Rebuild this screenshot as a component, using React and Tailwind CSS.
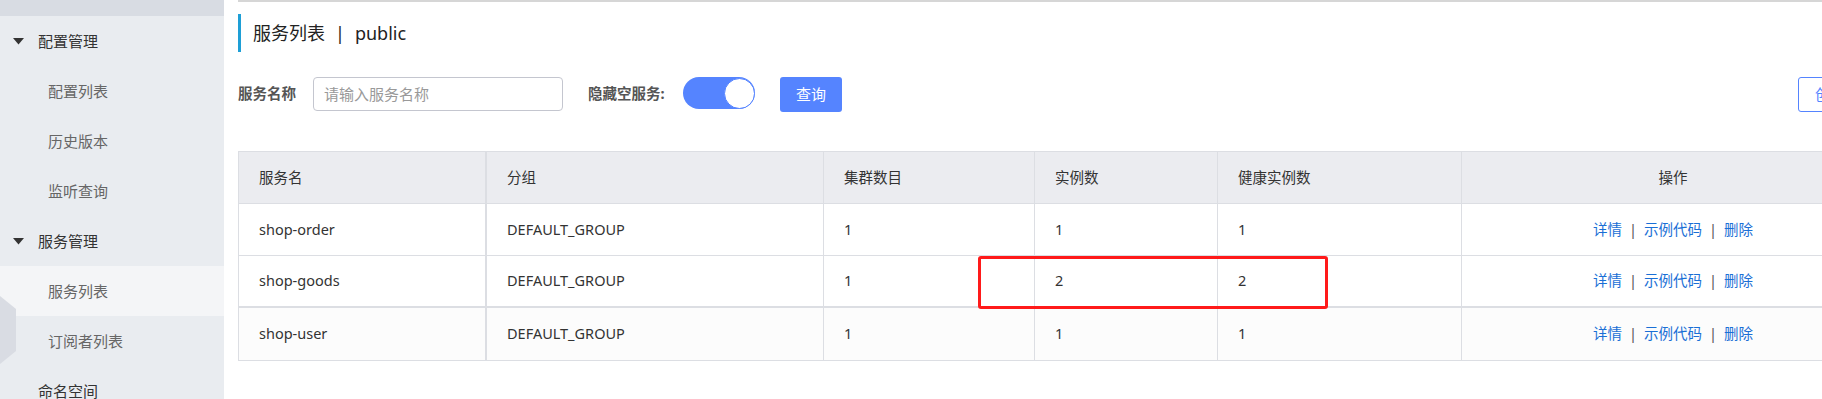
import React from "react";

const FONT = "[font-family:'Noto_Sans','Noto_Sans_CJK_SC',sans-serif]";

function SideHeader({ label }) {
  return (
    <div className="h-[50px] shrink-0 flex items-center text-[15px] text-[#333]">
      <svg width="11" height="7" viewBox="0 0 11 7" className="ml-[13px] mr-[14px]">
        <polygon points="0,0 11,0 5.5,6.5" fill="#333" />
      </svg>
      <span>{label}</span>
    </div>
  );
}

function SideItem({ label, active }) {
  return (
    <div
      className={
        "h-[50px] shrink-0 flex items-center pl-[48px] text-[15px] text-[#666] " +
        (active ? "bg-[#f4f5f7]" : "")
      }
    >
      {label}
    </div>
  );
}

const rows = [
  { name: "shop-order", group: "DEFAULT_GROUP", cluster: "1", inst: "1", healthy: "1", bg: "bg-white", border: "border-b" },
  { name: "shop-goods", group: "DEFAULT_GROUP", cluster: "1", inst: "2", healthy: "2", bg: "bg-white", border: "border-b-2" },
  { name: "shop-user", group: "DEFAULT_GROUP", cluster: "1", inst: "1", healthy: "1", bg: "bg-[#fcfcfc]", border: "" },
];

const GRID = "grid grid-cols-[248px_337px_211px_183px_244px_1fr]";
const CELL = "flex items-center pl-5 border-r border-[#dcdee3]";

export default function App() {
  return (
    <div className={"relative w-[1822px] h-[399px] overflow-hidden flex bg-white " + FONT}>
      {/* Sidebar */}
      <aside className="relative w-[224px] shrink-0 h-full overflow-hidden bg-[#e9ecf0] flex flex-col">
        <div className="h-4 shrink-0 bg-[#d8dce3]" />
        <SideHeader label="配置管理" />
        <SideItem label="配置列表" />
        <SideItem label="历史版本" />
        <SideItem label="监听查询" />
        <SideHeader label="服务管理" />
        <SideItem label="服务列表" active />
        <SideItem label="订阅者列表" />
        <div className="h-[50px] shrink-0 flex items-center pl-[38px] text-[15px] text-[#333]">命名空间</div>
        <svg width="16" height="68" viewBox="0 0 16 68" className="absolute left-0 top-[296px]">
          <polygon points="0,0 16,13 16,55 0,68" fill="#d9dce3" />
        </svg>
      </aside>

      {/* Main */}
      <main className="flex-1 min-w-0 overflow-hidden pl-[14px]">
        <div className="w-[1647px]">
          <div className="h-[2px] bg-[#d6d6d6]" />
          <div className="mt-[12px] h-[38px] border-l-[3px] border-[#1e9fd6] pl-3 flex items-center text-[18px] text-[#222]">
            <span>服务列表</span>
            <span className="mx-[10px]">|</span>
            <span>public</span>
          </div>

          <div className="mt-[25px] h-[35px] flex items-start">
            <div className="w-[75px] h-[34px] flex items-center text-[14.5px] font-bold text-[#555]">服务名称</div>
            <input
              className="w-[250px] h-[34px] border border-[#c4c6cf] rounded-[4px] pl-[10px] text-[15px] outline-none placeholder:text-[#999]"
              placeholder="请输入服务名称"
            />
            <div className="ml-[25px] w-[95px] h-[34px] flex items-center text-[14.5px] font-bold text-[#555]">隐藏空服务:</div>
            <div className="w-[72px] h-[32px] rounded-full bg-[#5584ff] flex items-center justify-end">
              <div className="w-[31px] h-[31px] rounded-full bg-white border border-[#5584ff]" />
            </div>
            <button className="ml-[25px] w-[62px] h-[35px] rounded-[3px] bg-[#5584ff] text-white text-[15px] flex items-center justify-center">
              查询
            </button>
            <button className="ml-auto w-[87px] h-[35px] rounded-[3px] border border-[#5584ff] bg-white text-[#5584ff] text-[15px] pl-[16px] text-left whitespace-nowrap overflow-hidden">
              创建服务
            </button>
          </div>

          {/* Table */}
          <div className="mt-[39px] border border-[#dcdee3] text-[14.5px] text-[#333]">
            <div className={GRID + " h-[52px] bg-[#ebecf0] border-b border-[#dcdee3]"}>
              <div className={CELL + " border-r-2"}>服务名</div>
              <div className={CELL}>分组</div>
              <div className={CELL}>集群数目</div>
              <div className={CELL}>实例数</div>
              <div className={CELL}>健康实例数</div>
              <div className="flex items-center justify-center">操作</div>
            </div>
            {rows.map((r) => (
              <div
                key={r.name}
                className={GRID + " h-[52px] border-[#dcdee3] " + r.bg + " " + r.border}
              >
                <div className={CELL + " border-r-2"}>{r.name}</div>
                <div className={CELL}>{r.group}</div>
                <div className={CELL}>{r.cluster}</div>
                <div className={CELL}>{r.inst}</div>
                <div className={CELL}>{r.healthy}</div>
                <div className="flex items-center justify-center text-[#1a6fd6]">
                  <span>详情</span>
                  <span className="mx-[7px] text-[#555]">|</span>
                  <span>示例代码</span>
                  <span className="mx-[7px] text-[#555]">|</span>
                  <span>删除</span>
                </div>
              </div>
            ))}
          </div>
        </div>
      </main>

      {/* Red annotation box */}
      <div className="absolute left-[978px] top-[256px] w-[350px] h-[53px] border-[3px] border-[#ff1a1a] rounded-[3px]" />
    </div>
  );
}
